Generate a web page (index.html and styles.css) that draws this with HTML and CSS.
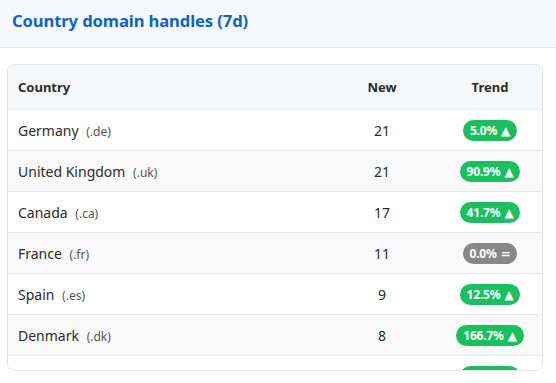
FILE: index.html
```html
<!DOCTYPE html>
<html>
<head>
<meta charset="utf-8">
<link rel="stylesheet" href="styles.css">
</head>
<body>
<div class="header"><h1 class="title">Country domain handles (7d)</h1></div>
<div class="card">
  <div class="row head">
    <div class="c-country">Country</div>
    <div class="c-new">New</div>
    <div class="c-trend">Trend</div>
  </div>
  <div class="row">
    <div class="c-country">Germany <span class="tld">(.de)</span></div>
    <div class="c-new">21</div>
    <div class="c-trend"><span class="badge up">5.0%<span class="arr">▲</span></span></div>
  </div>
  <div class="row alt">
    <div class="c-country">United Kingdom <span class="tld">(.uk)</span></div>
    <div class="c-new">21</div>
    <div class="c-trend"><span class="badge up">90.9%<span class="arr">▲</span></span></div>
  </div>
  <div class="row">
    <div class="c-country">Canada <span class="tld">(.ca)</span></div>
    <div class="c-new">17</div>
    <div class="c-trend"><span class="badge up">41.7%<span class="arr">▲</span></span></div>
  </div>
  <div class="row alt">
    <div class="c-country">France <span class="tld">(.fr)</span></div>
    <div class="c-new">11</div>
    <div class="c-trend"><span class="badge flat">0.0%<span class="arr">=</span></span></div>
  </div>
  <div class="row">
    <div class="c-country">Spain <span class="tld">(.es)</span></div>
    <div class="c-new">9</div>
    <div class="c-trend"><span class="badge up">12.5%<span class="arr">▲</span></span></div>
  </div>
  <div class="row alt">
    <div class="c-country">Denmark <span class="tld">(.dk)</span></div>
    <div class="c-new">8</div>
    <div class="c-trend"><span class="badge up">166.7%<span class="arr">▲</span></span></div>
  </div>
  <div class="row partial">
    <div class="c-country"></div>
    <div class="c-new"></div>
    <div class="c-trend"><span class="badge up pill"></span></div>
  </div>
</div>
</body>
</html>
```
FILE: styles.css
```css
html, body {
  margin: 0;
  padding: 0;
  background: #ffffff;
  font-family: "Noto Sans", "Open Sans", sans-serif;
  color: #2b2b2b;
}
.header {
  height: 47px;
  background: #f6f8fb;
  border-bottom: 1px solid #e4e6ea;
  display: flex;
  align-items: flex-start;
  padding-left: 12px;
}
.title {
  margin: 9px 0 0 0;
  font-size: 16.6px;
  font-weight: 700;
  color: #0b64c9;
  letter-spacing: -0.1px;
}
.card {
  margin: 16px 13px 0 7px;
  height: 305px;
  border: 1px solid #e4e6ea;
  border-radius: 7px;
  overflow: hidden;
}
.row {
  display: grid;
  grid-template-columns: 1fr 112px 104px;
  align-items: center;
  height: 40px;
  border-bottom: 1px solid #e8e9ec;
  font-size: 14px;
  background: #ffffff;
}
.row.alt { background: #f9f9f9; }
.row.head {
  height: 44px;
  background: #f6f7f9;
  font-weight: 700;
  font-size: 13px;
}
.c-country { padding-left: 10px; }
.c-new, .c-trend { text-align: center; }
.tld {
  font-size: 12px;
  color: #555;
  margin-left: 4px;
}
.badge {
  display: inline-block;
  vertical-align: middle;
  color: #fff;
  font-weight: 700;
  font-size: 12px;
  line-height: 21px;
  height: 21px;
  padding: 0 7px;
  border-radius: 11px;
  letter-spacing: -0.2px;
}
.arr {
  font-size: 12px;
  font-family: "DejaVu Sans", sans-serif;
  margin-left: 4px;
}
.badge.up { background: #1abf5f; }
.badge.flat { background: #888888; }
.badge.pill { width: 60px; padding: 0; }
```
